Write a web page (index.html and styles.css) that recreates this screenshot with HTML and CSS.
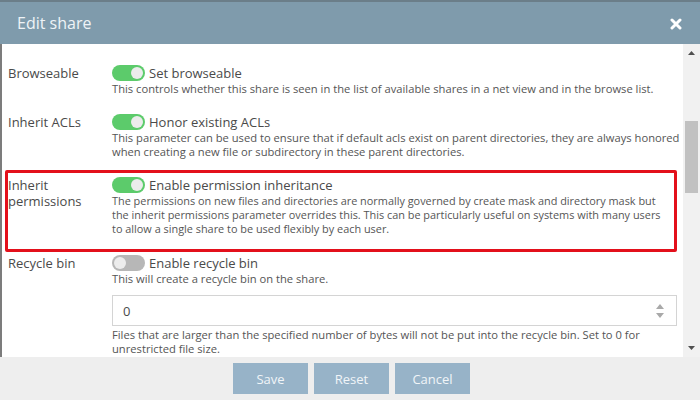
FILE: index.html
```html
<!DOCTYPE html>
<html>
<head>
<meta charset="utf-8">
<link rel="stylesheet" href="styles.css">
</head>
<body>
<div class="modal">
  <div class="header">
    <span class="title">Edit share</span>
    <svg class="close" width="12" height="12" viewBox="0 0 12 12"><path d="M2 2 L10 10 M10 2 L2 10" stroke="#ffffff" stroke-width="3" stroke-linecap="round"/></svg>
  </div>
  <div class="body">
    <div class="content">
      <div class="row">
        <div class="label">Browseable</div>
        <div class="field">
          <div class="check"><span class="toggle on"></span><span>Set browseable</span></div>
          <div class="desc">This controls whether this share is seen in the list of available shares in a net view and in the browse list.</div>
        </div>
      </div>
      <div class="row">
        <div class="label">Inherit ACLs</div>
        <div class="field">
          <div class="check"><span class="toggle on"></span><span>Honor existing ACLs</span></div>
          <div class="desc">This parameter can be used to ensure that if default acls exist on parent directories, they are always honored<br>when creating a new file or subdirectory in these parent directories.</div>
        </div>
      </div>
      <div class="row highlight">
        <div class="label">Inherit permissions</div>
        <div class="field">
          <div class="check"><span class="toggle on"></span><span>Enable permission inheritance</span></div>
          <div class="desc">The permissions on new files and directories are normally governed by create mask and directory mask but<br>the inherit permissions parameter overrides this. This can be particularly useful on systems with many users<br>to allow a single share to be used flexibly by each user.</div>
        </div>
      </div>
      <div class="row">
        <div class="label">Recycle bin</div>
        <div class="field">
          <div class="check"><span class="toggle"></span><span>Enable recycle bin</span></div>
          <div class="desc">This will create a recycle bin on the share.</div>
          <div class="input"><span>0</span>
            <svg class="spin" width="10" height="16" viewBox="0 0 10 16"><path d="M1 6 L5 1 L9 6 Z M1 10 L5 15 L9 10 Z" fill="#a9a9a9"/></svg>
          </div>
          <div class="desc">Files that are larger than the specified number of bytes will not be put into the recycle bin. Set to 0 for<br>unrestricted file size.</div>
        </div>
      </div>
    </div>
    <div class="scrollbar">
      <svg class="arrow" width="7" height="4" viewBox="0 0 7 4"><path d="M0 4 L3.5 0 L7 4 Z" fill="#505050"/></svg>
      <div class="track"><div class="thumb"></div></div>
      <svg class="arrow" width="7" height="4" viewBox="0 0 7 4"><path d="M0 0 L3.5 4 L7 0 Z" fill="#505050"/></svg>
    </div>
  </div>
  <div class="footer">
    <button class="btn">Save</button>
    <button class="btn">Reset</button>
    <button class="btn">Cancel</button>
  </div>
</div>
</body>
</html>
```

FILE: styles.css
```css
html, body {
  margin: 0;
  padding: 0;
}
body {
  font-family: "Open Sans", "Noto Sans", sans-serif;
  background: #ffffff;
}
.modal {
  width: 700px;
  height: 400px;
  display: flex;
  flex-direction: column;
  overflow: hidden;
}
.header {
  height: 42px;
  border-top: 2px solid #6b7e89;
  background: #7f9bac;
  display: flex;
  align-items: center;
  justify-content: space-between;
  padding: 0 18px 0 17px;
  flex: none;
}
.title {
  color: #eef3f7;
  font-size: 16px;
}
.close {
  margin-top: 1px;
}
.body {
  flex: 1;
  display: flex;
  min-height: 0;
  border-left: 2px solid #7c7c7c;
}
.content {
  flex: 1;
  padding: 21px 6px 0 6px;
  overflow: hidden;
}
.row {
  display: flex;
  margin-bottom: 18px;
}
.label {
  width: 104px;
  flex: none;
  font-size: 13px;
  line-height: 16px;
  color: #4a4a4a;
}
.field {
  flex: 1;
  min-width: 0;
}
.check {
  display: flex;
  align-items: center;
  height: 16px;
  font-size: 13px;
  color: #4a4a4a;
}
.toggle {
  width: 33px;
  height: 16px;
  border-radius: 8px;
  background: #b7b7b7;
  margin-right: 4px;
  position: relative;
  flex: none;
}
.toggle::after {
  content: "";
  position: absolute;
  top: 2px;
  left: 2px;
  width: 12px;
  height: 12px;
  border-radius: 50%;
  background: #ececec;
}
.toggle.on {
  background: #5ccb6b;
}
.toggle.on::after {
  left: 19px;
}
.desc {
  font-size: 11.2px;
  line-height: 14px;
  color: #555555;
  margin-top: 1px;
  white-space: nowrap;
}
.highlight {
  margin: -7px 0 3px -3px;
  border: 3px solid #e3101b;
  border-radius: 2px;
  padding: 4px 0 13px 0;
}
.highlight .desc {
  font-size: 10.9px;
}
.input {
  margin-top: 9px;
  height: 29px;
  border: 1px solid #d4d4d4;
  display: flex;
  align-items: center;
  justify-content: space-between;
  padding: 0 11px 0 10px;
  font-size: 13px;
  color: #4a4a4a;
}
.input + .desc {
  margin-top: 2px;
}
.scrollbar {
  width: 17px;
  flex: none;
  background: #f1f1f1;
  display: flex;
  flex-direction: column;
  align-items: center;
  padding: 7px 0 7px 0;
  box-sizing: border-box;
}
.arrow {
  flex: none;
}
.track {
  flex: 1;
  width: 100%;
  padding-top: 66px;
}
.thumb {
  width: 13px;
  height: 72px;
  margin-left: 2px;
  background: #c1c1c1;
}
.footer {
  height: 43px;
  flex: none;
  background: #eeeeee;
  display: flex;
  justify-content: center;
  align-items: center;
  gap: 6px;
  padding-left: 3px;
}
.btn {
  width: 75px;
  height: 31px;
  border: none;
  background: #97b3c8;
  color: #f1f5f8;
  font-family: "Open Sans", "Noto Sans", sans-serif;
  font-size: 13px;
  padding: 0;
}
```
